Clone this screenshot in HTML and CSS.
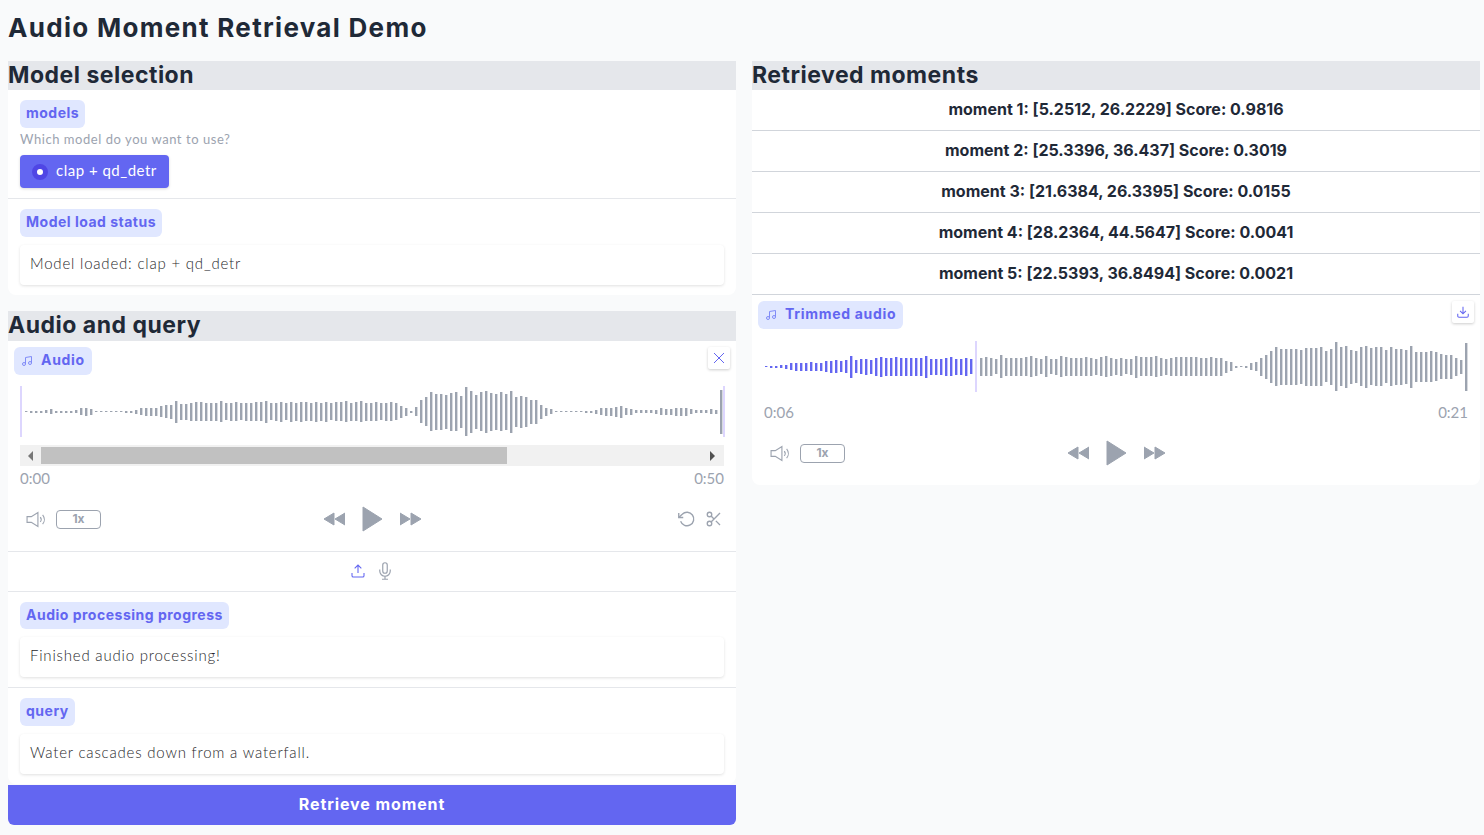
FILE: index.html
```html
<!DOCTYPE html>
<html lang="en">
<head>
    <meta charset="UTF-8">
    <meta name="viewport" content="width=device-width, initial-scale=1.0">
    <title>Audio Moment Retrieval Demo</title>
    <link rel="stylesheet" href="styles.css">
</head>
<body>
    <svg class="icon-defs" width="0" height="0">
        <symbol id="i-music" viewBox="0 0 24 24"><path d="M9 18V5l12-2v13"/><circle cx="6" cy="18" r="3"/><circle cx="18" cy="16" r="3"/></symbol>
        <symbol id="i-volume" viewBox="0 0 22 18"><path d="M1 6h4.5L12.500 1.500v15L5.500 12H1z"/><path d="M15 6.500a4 4 0 0 1 0 5"/><path d="M17.500 4a8 8 0 0 1 0 10"/></symbol>
        <symbol id="i-rewind" viewBox="0 0 22 14"><path d="M11 1v12L1 7z"/><path d="M22 1v12L12 7z"/></symbol>
        <symbol id="i-forward" viewBox="0 0 22 14"><path d="M0 1v12l10-6z"/><path d="M11 1v12l10-6z"/></symbol>
        <symbol id="i-play" viewBox="0 0 21 26"><path d="M1 1v24l19-12z"/></symbol>
    </svg>

    <h1 class="page-title">Audio Moment Retrieval Demo</h1>

    <div class="columns">
        <div class="column">
            <section class="section">
                <h2 class="section-head">Model selection</h2>
                <div class="panel">
                    <div class="field field-line">
                        <span class="badge">models</span>
                        <p class="hint">Which model do you want to use?</p>
                        <label class="radio"><span class="radio-dot"></span>clap + qd_detr</label>
                    </div>
                    <div class="field">
                        <span class="badge">Model load status</span>
                        <div class="textbox">Model loaded: clap + qd_detr</div>
                    </div>
                </div>
            </section>

            <section class="section">
                <h2 class="section-head tall">Audio and query</h2>
                <div class="panel">
                    <div class="audio audio-input">
                        <span class="badge badge-icon">
                            <svg class="icon-music"><use href="#i-music"/></svg>Audio
                        </span>
                        <button class="corner-btn" aria-label="Clear">
                            <svg class="icon-close" width="12" height="12" viewBox="0 0 12 12"><path d="M1 1l10 10M11 1L1 11"/></svg>
                        </button>
                        <div class="wave" id="wave-input"></div>
                        <div class="scrollbar">
                            <span class="arrow arrow-left"></span>
                            <span class="thumb"></span>
                            <span class="arrow arrow-right"></span>
                        </div>
                        <div class="times"><span>0:00</span><span>0:50</span></div>
                        <div class="controls">
                            <div class="controls-left">
                                <svg class="icon-volume"><use href="#i-volume"/></svg>
                                <span class="speed">1x</span>
                            </div>
                            <div class="controls-mid">
                                <svg class="icon-skip"><use href="#i-rewind"/></svg>
                                <svg class="icon-play"><use href="#i-play"/></svg>
                                <svg class="icon-skip"><use href="#i-forward"/></svg>
                            </div>
                            <div class="controls-right">
                                <svg class="icon-line" viewBox="0 0 24 24"><path d="M1 4v6h6"/><path d="M3.510 15a9 9 0 1 0 2.130-9.360L1 10"/></svg>
                                <svg class="icon-line" viewBox="0 0 24 24"><circle cx="6" cy="6" r="3"/><circle cx="6" cy="18" r="3"/><path d="M20 4L8.120 15.880M14.470 14.480L20 20M8.120 8.120L12 12"/></svg>
                            </div>
                        </div>
                    </div>
                    <div class="sources">
                        <svg class="icon-upload" viewBox="0 0 24 24"><path d="M21 15v4a2 2 0 0 1-2 2H5a2 2 0 0 1-2-2v-4"/><path d="M17 8l-5-5-5 5M12 3v12"/></svg>
                        <svg class="icon-mic" viewBox="0 0 24 24"><path d="M12 1a3 3 0 0 0-3 3v8a3 3 0 0 0 6 0V4a3 3 0 0 0-3-3z"/><path d="M19 10v2a7 7 0 0 1-14 0v-2M12 19v4M8 23h8"/></svg>
                    </div>
                    <div class="field field-line">
                        <span class="badge badge-short">Audio processing progress</span>
                        <div class="textbox">Finished audio processing!</div>
                    </div>
                    <div class="field">
                        <span class="badge">query</span>
                        <div class="textbox">Water cascades down from a waterfall.</div>
                    </div>
                </div>
                <button class="primary">Retrieve moment</button>
            </section>
        </div>

        <div class="column">
            <section class="section">
                <h2 class="section-head">Retrieved moments</h2>
                <div class="panel">
                    <div class="moment">moment 1: [5.2512, 26.2229] Score: 0.9816</div>
                    <div class="moment">moment 2: [25.3396, 36.437] Score: 0.3019</div>
                    <div class="moment">moment 3: [21.6384, 26.3395] Score: 0.0155</div>
                    <div class="moment">moment 4: [28.2364, 44.5647] Score: 0.0041</div>
                    <div class="moment">moment 5: [22.5393, 36.8494] Score: 0.0021</div>
                    <div class="audio audio-trimmed">
                        <span class="badge badge-icon">
                            <svg class="icon-music"><use href="#i-music"/></svg>Trimmed audio
                        </span>
                        <button class="corner-btn" aria-label="Download">
                            <svg class="icon-download" width="14" height="14" viewBox="0 0 24 24"><path d="M21 15v4a2 2 0 0 1-2 2H5a2 2 0 0 1-2-2v-4"/><path d="M7 10l5 5 5-5M12 15V3"/></svg>
                        </button>
                        <div class="wave" id="wave-trimmed"></div>
                        <div class="times"><span>0:06</span><span>0:21</span></div>
                        <div class="controls">
                            <div class="controls-left">
                                <svg class="icon-volume"><use href="#i-volume"/></svg>
                                <span class="speed">1x</span>
                            </div>
                            <div class="controls-mid">
                                <svg class="icon-skip"><use href="#i-rewind"/></svg>
                                <svg class="icon-play"><use href="#i-play"/></svg>
                                <svg class="icon-skip"><use href="#i-forward"/></svg>
                            </div>
                            <div class="controls-right"></div>
                        </div>
                    </div>
                </div>
            </section>
        </div>
    </div>

    <script src="waveform.js"></script>
</body>
</html>
```

FILE: styles.css
```css
* {
    box-sizing: border-box;
}
body {
    margin: 0;
    padding: 8px 4px 0 8px;
    background: #f9fafb;
    color: #1f2937;
    font-family: 'Lato', sans-serif;
}
.icon-defs {
    position: absolute;
}
.page-title {
    margin: 0 0 16px;
    height: 37px;
    font-family: 'Inter', sans-serif;
    font-size: 26px;
    font-weight: 700;
    letter-spacing: 1.3px;
    line-height: 39px;
}
.columns {
    display: grid;
    grid-template-columns: 728px 728px;
    gap: 16px;
    align-items: start;
}
.section {
    margin-bottom: 16px;
}
.section-head {
    margin: 0;
    height: 29px;
    background: #e5e7eb;
    font-family: 'Inter', sans-serif;
    font-size: 23px;
    font-weight: 700;
    letter-spacing: 0.5px;
    line-height: 28px;
}
.section-head.tall {
    height: 30px;
}
.panel {
    background: #fff;
    border-radius: 0 0 8px 8px;
}
.field {
    padding: 10px 12px;
}
.field-line {
    border-bottom: 1px solid #e5e7eb;
}
.badge {
    display: inline-flex;
    align-items: center;
    height: 28px;
    padding: 0 6px 4px;
    border-radius: 6px;
    background: #e0e7ff;
    color: #6366f1;
    font-family: 'Inter', sans-serif;
    font-size: 14px;
    font-weight: 700;
    letter-spacing: 0.5px;
}
.badge-short {
    height: 27px;
    padding-bottom: 3px;
}
.badge-icon {
    padding: 0 7px 4px;
    letter-spacing: 0.7px;
}
.icon-music {
    width: 12px;
    height: 12px;
    margin-top: 4px;
    margin-right: 8px;
    fill: none;
    stroke: #818cf8;
    stroke-width: 2;
}
.hint {
    margin: 3px 0 7px;
    height: 17px;
    color: #9ca3af;
    font-size: 13px;
    letter-spacing: 0.55px;
    line-height: 17px;
}
.radio {
    display: inline-flex;
    align-items: center;
    height: 33px;
    padding: 0 12px 3px;
    border-radius: 4px;
    background: #6366f1;
    box-shadow: 0 1px 3px rgba(0, 0, 0, 0.15);
    color: #fff;
    font-size: 15px;
    letter-spacing: 0.5px;
}
.radio-dot {
    width: 16px;
    height: 16px;
    margin-top: 3px;
    margin-right: 8px;
    border-radius: 50%;
    border: 5px solid #4f46e5;
    background: #fff;
}
.textbox {
    display: flex;
    align-items: center;
    height: 40px;
    margin-top: 8px;
    padding: 0 10px 5px;
    border-radius: 4px;
    background: #fff;
    box-shadow: 0 1px 3px rgba(0, 0, 0, 0.12);
    color: #27272a;
    font-size: 15px;
    font-weight: 300;
    letter-spacing: 0.8px;
}
.audio {
    position: relative;
    padding: 6px;
}
.corner-btn {
    position: absolute;
    top: 6px;
    right: 6px;
    display: flex;
    align-items: center;
    justify-content: center;
    width: 22px;
    height: 22px;
    padding: 0;
    border: none;
    border-radius: 2px;
    background: #fff;
    box-shadow: 0 1px 3px rgba(0, 0, 0, 0.2);
}
.corner-btn svg {
    fill: none;
    stroke: #6366f1;
}
.icon-close {
    stroke-width: 1;
}
.icon-download {
    stroke-width: 1.800;
}
.wave {
    position: relative;
    display: flex;
    align-items: center;
    gap: 3px;
    height: 51px;
    margin: 11px 6px 0;
    padding-left: 5px;
}
.bar {
    flex: none;
    width: 2px;
    background: #9ca3af;
    box-shadow: 1px 0 0 rgba(156, 163, 175, 0.4);
}
.bar.played {
    background: #6366f1;
    box-shadow: 1px 0 0 rgba(99, 102, 241, 0.4);
}
.cursor {
    position: absolute;
    top: 0;
    bottom: 0;
    width: 2px;
    background: #ddd6fe;
}
.scrollbar {
    display: flex;
    align-items: center;
    height: 21px;
    margin: 8px 6px 0;
    padding: 2px 0;
    background: #f1f1f1;
}
.thumb {
    width: 466px;
    height: 17px;
    background: #c1c1c1;
}
.arrow {
    width: 0;
    height: 0;
    border-top: 5px solid transparent;
    border-bottom: 5px solid transparent;
}
.arrow-left {
    margin: 0 8px;
    border-right: 5px solid #777;
}
.arrow-right {
    margin-left: auto;
    margin-right: 9px;
    border-left: 5px solid #505050;
}
.times {
    display: flex;
    justify-content: space-between;
    margin: 3px 6px 0;
    height: 19px;
    color: #9ca3af;
    font-size: 15px;
    line-height: 19px;
}
.controls {
    display: grid;
    grid-template-columns: 1fr auto 1fr;
    align-items: center;
    height: 28px;
    margin: 17px 6px 0;
    padding: 0 1px;
}
.controls-left {
    display: flex;
    align-items: center;
    gap: 9px;
    padding-left: 5px;
}
.controls-mid {
    display: flex;
    align-items: center;
    gap: 17px;
}
.controls-right {
    display: flex;
    justify-content: flex-end;
    gap: 9px;
}
.icon-volume {
    width: 21px;
    height: 17px;
    fill: none;
    stroke: #9ca3af;
    stroke-width: 1.200;
}
.speed {
    width: 45px;
    height: 19px;
    border: 1px solid #9ca3af;
    border-radius: 4px;
    color: #9ca3af;
    font-family: 'Inter', sans-serif;
    font-size: 12px;
    font-weight: 700;
    line-height: 15px;
    text-align: center;
}
.icon-skip {
    width: 22px;
    height: 14px;
    fill: #9ca3af;
    stroke: #9ca3af;
    stroke-linejoin: round;
}
.icon-play {
    width: 21px;
    height: 26px;
    fill: #9ca3af;
    stroke: #9ca3af;
    stroke-linejoin: round;
}
.icon-line {
    width: 18px;
    height: 18px;
    fill: none;
    stroke: #9ca3af;
    stroke-width: 1.800;
}
.sources {
    display: flex;
    justify-content: center;
    align-items: center;
    gap: 10px;
    height: 41px;
    margin-top: 12px;
    padding-bottom: 2px;
    border-top: 1px solid #e5e7eb;
    border-bottom: 1px solid #e5e7eb;
}
.sources svg {
    fill: none;
    stroke-width: 1.600;
}
.icon-upload {
    width: 16px;
    height: 16px;
    stroke: #6366f1;
}
.icon-mic {
    width: 18px;
    height: 18px;
    stroke: #9ca3af;
}
.primary {
    display: block;
    width: 100%;
    height: 40px;
    margin-top: 1px;
    padding-bottom: 3px;
    border: none;
    border-radius: 0 0 6px 6px;
    background: #6366f1;
    color: #fff;
    font-family: 'Inter', sans-serif;
    font-size: 16px;
    font-weight: 700;
    letter-spacing: 0.9px;
}
.moment {
    display: flex;
    justify-content: center;
    align-items: center;
    height: 41px;
    padding-bottom: 3px;
    border-bottom: 1px solid #d1d5db;
    color: #1f2937;
    font-family: 'Inter', sans-serif;
    font-size: 16px;
    font-weight: 700;
}
.audio-trimmed {
    height: 190px;
}
.audio-trimmed .wave {
    margin: 12px 6px 0 0;
    padding-left: 7px;
}
.audio-trimmed .times {
    margin-top: 11px;
}
.audio-trimmed .controls {
    margin-top: 17px;
}
```

FILE: waveform.js
```js
// Bar heights in px, one bar every 5px
const inputBars = [
    1, 2, 2, 2, 3, 5, 2, 2, 2, 2, 3, 7, 8, 6, 1, 1, 1, 1, 1, 1, 2, 2, 4, 7,
    8, 8, 8, 11, 13, 14, 22, 16, 16, 18, 19, 19, 18, 18, 18, 21, 17, 18, 19, 17, 18, 18, 19,
    19, 22, 17, 18, 20, 17, 20, 18, 20, 19, 18, 20, 18, 20, 17, 19, 19, 21, 18, 19, 21, 18, 18,
    19, 17, 18, 19, 17, 12, 8, 2, 9, 23, 29, 39, 36, 36, 34, 38, 39, 32, 49, 42, 34, 39, 42,
    38, 36, 39, 36, 42, 30, 32, 30, 24, 24, 14, 8, 5,
    1, 1, 1, 1, 1, 1, 2, 2, 4, 7, 8, 8, 10, 12, 7, 6, 3, 3, 3, 3, 4, 7, 6, 6, 8, 8, 8, 5, 3, 3, 3, 5, 4, 44
];
const trimmedBars = [
    1, 2, 2, 3, 4, 7, 8, 8, 8, 9, 8, 8, 11, 12, 13, 11, 13, 22, 13, 15, 16, 14, 18, 20, 18, 18, 19, 18,
    18, 18, 18, 18, 22, 16, 16, 16, 18, 19, 16, 16, 18, 15, 0, 18, 19, 18, 15,
    23, 18, 18, 18, 18, 19, 21, 18, 15, 21, 15, 16, 21, 19, 18, 18, 18, 19, 18, 16, 19, 21, 18, 16, 18, 15,
    16, 22, 19, 19, 19, 21, 18, 16, 18, 19, 19, 19, 19, 19, 18, 18, 19, 18, 18, 12, 9,
    2, 1, 2, 7, 9, 18, 24, 32, 39, 36, 36, 36, 36, 34, 38, 38, 38, 39, 31, 36, 49, 39, 42, 34, 32, 39, 42,
    37, 39, 39, 33, 39, 36, 36, 34, 42, 30, 30, 30, 31, 29, 25, 24, 24, 18, 14, 48
];

function drawWave(id, bars, playedCount, cursors) {
    const wave = document.getElementById(id);
    bars.forEach((h, i) => {
        const bar = document.createElement('div');
        bar.className = i < playedCount ? 'bar played' : 'bar';
        bar.style.height = h + 'px';
        wave.appendChild(bar);
    });
    cursors.forEach((x) => {
        const cursor = document.createElement('div');
        cursor.className = 'cursor';
        cursor.style.left = x + 'px';
        wave.appendChild(cursor);
    });
}

drawWave('wave-input', inputBars, 0, [0, 703]);
drawWave('wave-trimmed', trimmedBars, 42, [217]);
```
